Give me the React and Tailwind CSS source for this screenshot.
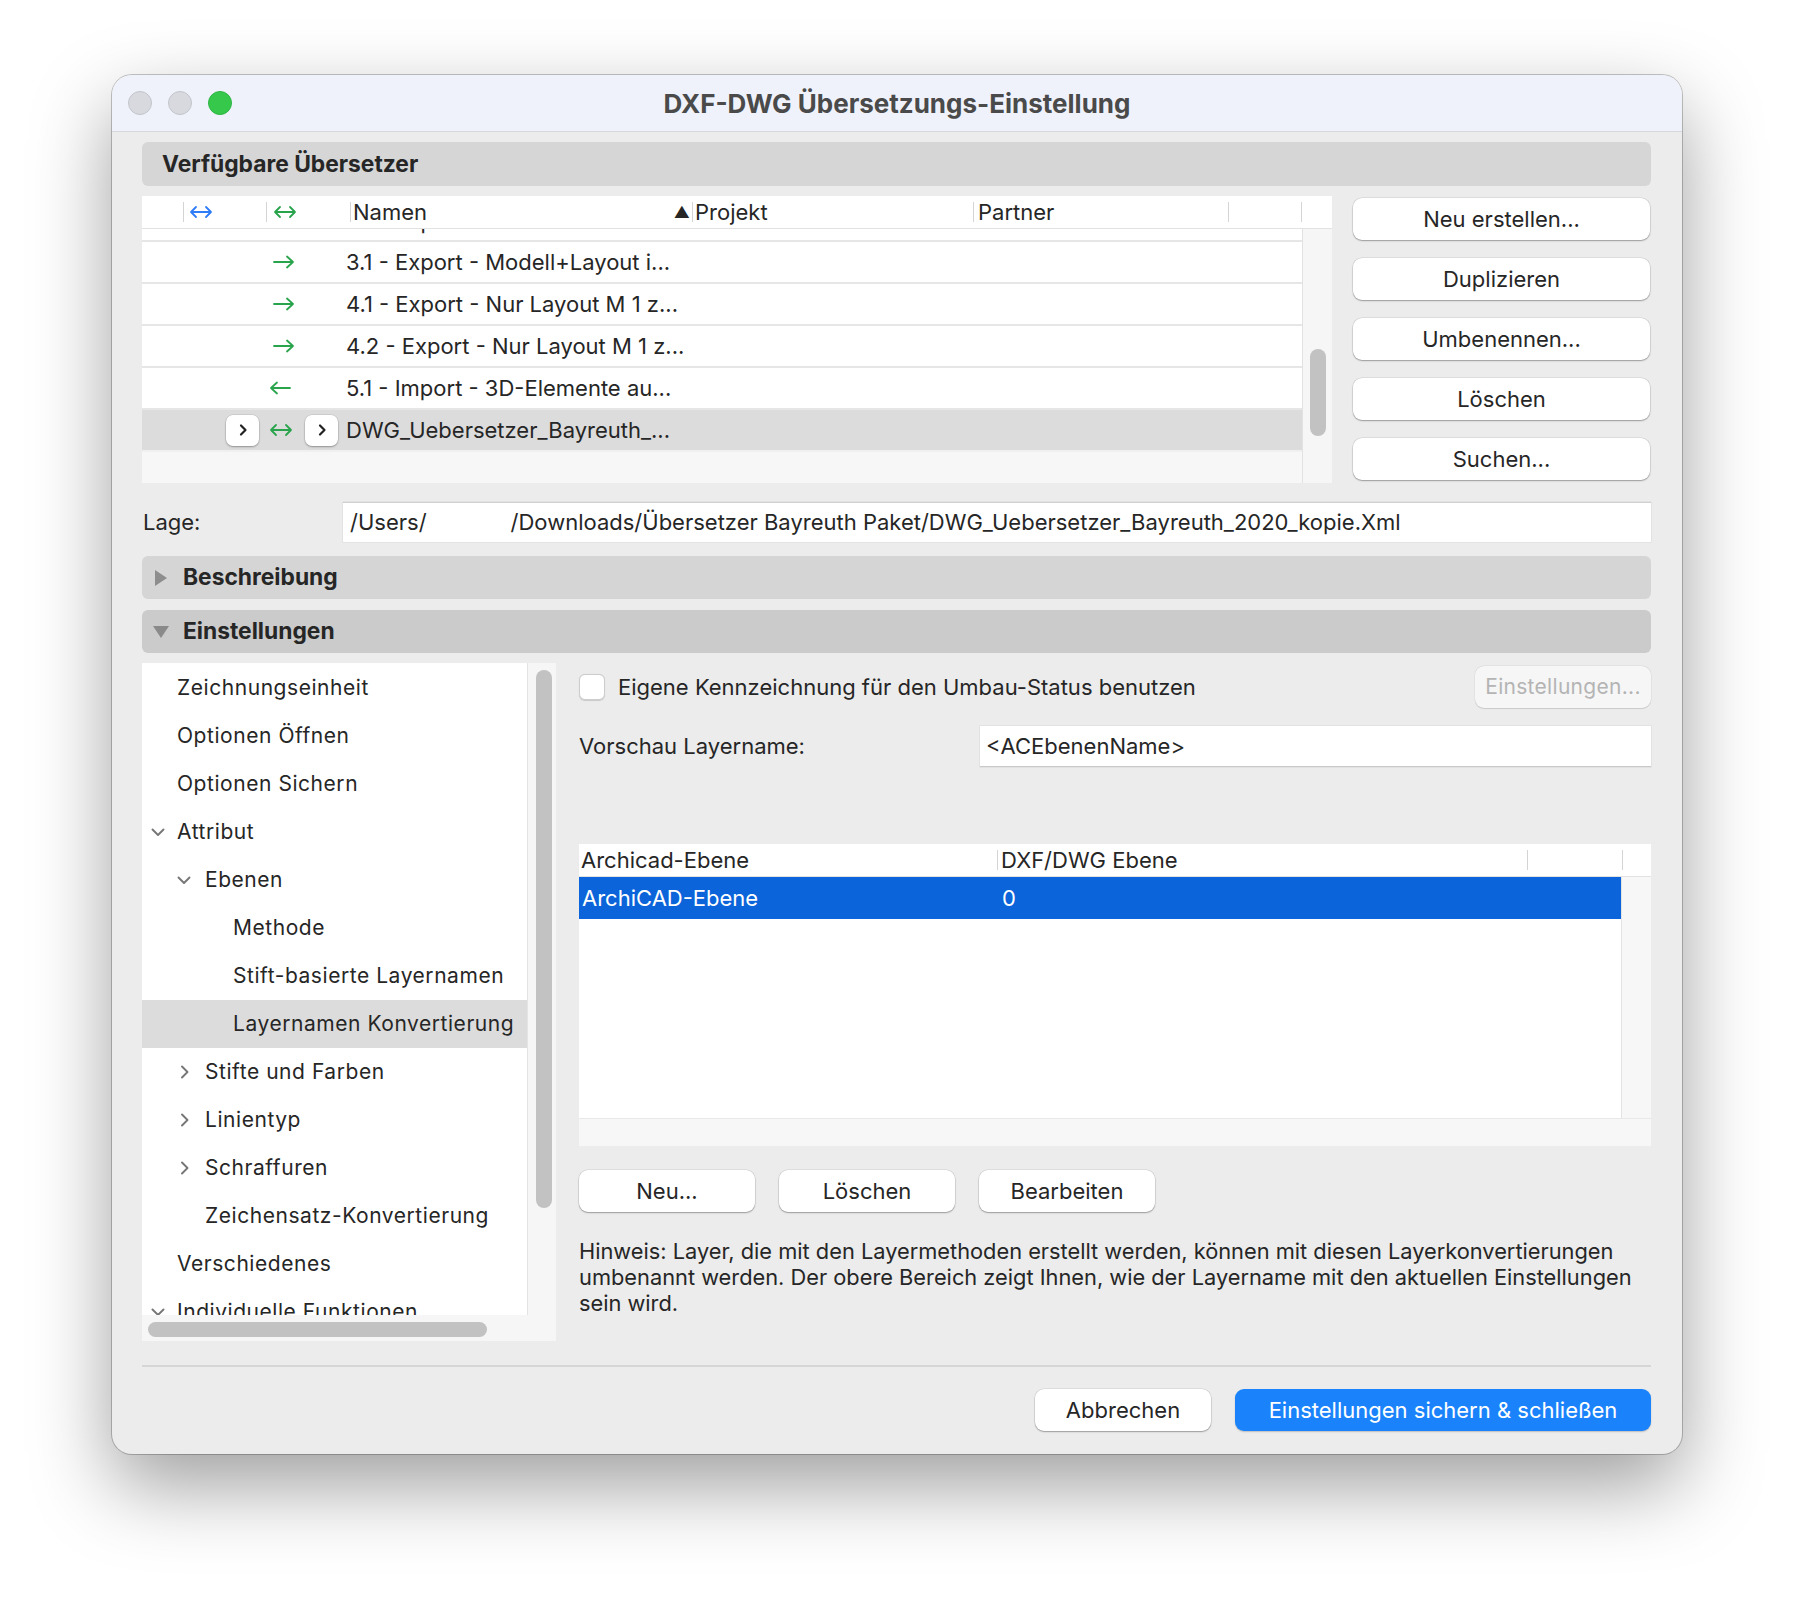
import React from "react";

const GREEN = "#2aa44c";
const BLUE = "#2f7cf6";

function ArrowRight() {
  return (
    <svg width="24" height="16" viewBox="0 0 24 16" fill="none" stroke={GREEN} strokeWidth="1.8" strokeLinecap="round" strokeLinejoin="round">
      <path d="M2 8h19M15 2.5 21 8l-6 5.5" />
    </svg>
  );
}

function ArrowLeft() {
  return (
    <svg width="24" height="16" viewBox="0 0 24 16" fill="none" stroke={GREEN} strokeWidth="1.8" strokeLinecap="round" strokeLinejoin="round">
      <path d="M22 8H3M9 2.5 3 8l6 5.5" />
    </svg>
  );
}

function ArrowBoth({ color = GREEN }) {
  return (
    <svg width="26" height="16" viewBox="0 0 26 16" fill="none" stroke={color} strokeWidth="1.8" strokeLinecap="round" strokeLinejoin="round">
      <path d="M3 8h20M8 3 3 8l5 5M18 3l5 5-5 5" />
    </svg>
  );
}

function Chevron({ dir = "right" }) {
  const d = dir === "right" ? "M6 2.5l5.5 5.5L6 13.5" : "M2.5 5.5 8 11l5.5-5.5";
  return (
    <svg width="16" height="16" viewBox="0 0 16 16" fill="none" stroke="#767676" strokeWidth="1.9" strokeLinecap="round" strokeLinejoin="round">
      <path d={d} />
    </svg>
  );
}

function MiniButton() {
  return (
    <div className="flex h-[31px] w-[33px] items-center justify-center rounded-[7px] bg-white shadow-[0_1px_2px_rgba(0,0,0,0.3),0_0_0_0.5px_rgba(0,0,0,0.1)]">
      <svg width="10" height="14" viewBox="0 0 10 14" fill="none" stroke="#222" strokeWidth="2.2" strokeLinecap="round" strokeLinejoin="round">
        <path d="M3 2.5 7.5 7 3 11.5" />
      </svg>
    </div>
  );
}

function MacButton({ children, className = "" }) {
  return (
    <div className={`flex h-[42px] items-center justify-center rounded-[9px] bg-white text-[22px] text-[#262626] shadow-[0_1px_1.5px_rgba(0,0,0,0.3),0_0_0_0.5px_rgba(0,0,0,0.12)] ${className}`}>
      {children}
    </div>
  );
}

function HeadSep() {
  return <div className="h-[20px] w-px shrink-0 bg-[#d4d4d4]" />;
}

const rows = [
  { arrow: "right", name: "3.1 - Export - Modell+Layout i..." },
  { arrow: "right", name: "4.1 - Export - Nur Layout M 1 z..." },
  { arrow: "right", name: "4.2 - Export - Nur Layout M 1 z..." },
  { arrow: "left", name: "5.1 - Import - 3D-Elemente au..." },
];

const tree = [
  { label: "Zeichnungseinheit", level: 0 },
  { label: "Optionen Öffnen", level: 0 },
  { label: "Optionen Sichern", level: 0 },
  { label: "Attribut", level: 0, chevron: "down" },
  { label: "Ebenen", level: 1, chevron: "down" },
  { label: "Methode", level: 2 },
  { label: "Stift-basierte Layernamen", level: 2 },
  { label: "Layernamen Konvertierung", level: 2, selected: true },
  { label: "Stifte und Farben", level: 1, chevron: "right" },
  { label: "Linientyp", level: 1, chevron: "right" },
  { label: "Schraffuren", level: 1, chevron: "right" },
  { label: "Zeichensatz-Konvertierung", level: 1 },
  { label: "Verschiedenes", level: 0 },
  { label: "Individuelle Funktionen", level: 0, chevron: "down" },
];

const levelPad = ["pl-[35px]", "pl-[63px]", "pl-[91px]"];
const chevPad = ["left-[8px]", "left-[34px]", "left-[62px]"];

export default function App() {
  return (
    <div className="min-h-[1602px] w-full bg-white pl-[112px] pt-[75px] text-[#262626] [font-family:Inter,'Noto_Sans',sans-serif]">
      <div className="flex h-[1379px] w-[1570px] flex-col overflow-hidden rounded-[20px] bg-[#ececec] shadow-[0_32px_80px_rgba(0,0,0,0.38),0_0_0_1px_rgba(0,0,0,0.22)]">
        {/* title bar */}
        <div className="grid h-[57px] shrink-0 grid-cols-[1fr_auto_1fr] items-center border-b border-[#d6d8de] bg-[#eff2fb]">
          <div className="flex items-center gap-[16px] pl-[16px]">
            <div className="h-[24px] w-[24px] rounded-full border border-[#c3c5cb] bg-[#d7d9df]" />
            <div className="h-[24px] w-[24px] rounded-full border border-[#c3c5cb] bg-[#d7d9df]" />
            <div className="h-[24px] w-[24px] rounded-full border border-[#2fb544] bg-[#35c84b]" />
          </div>
          <div className="text-[26px] font-bold text-[#4a4a4a]">DXF-DWG Übersetzungs-Einstellung</div>
          <div />
        </div>

        <div className="flex flex-1 flex-col pl-[30px] pr-[31px] pt-[10px]">
          {/* Verfügbare Übersetzer */}
          <div className="flex h-[44px] items-center rounded-[6px] bg-[#d6d6d6] pl-[20px] text-[22.8px] font-bold">
            Verfügbare Übersetzer
          </div>

          <div className="mt-[10px] flex gap-[21px]">
            <div className="flex h-[287px] w-[1190px] flex-col bg-[#f6f6f6]">
              {/* header */}
              <div className="flex h-[33px] shrink-0 items-center border-b border-[#e2e2e2] bg-white text-[22px]">
                <div className="w-[41px]" />
                <div className="flex w-[83px] items-center">
                  <HeadSep />
                  <div className="ml-[4px]"><ArrowBoth color={BLUE} /></div>
                </div>
                <div className="flex w-[84px] items-center">
                  <HeadSep />
                  <div className="ml-[5px]"><ArrowBoth /></div>
                </div>
                <div className="flex w-[342px] items-center">
                  <HeadSep />
                  <span className="ml-[2px]">Namen</span>
                  <span className="ml-auto mr-[2px] text-[16px]">▲</span>
                </div>
                <div className="flex w-[281px] items-center">
                  <HeadSep />
                  <span className="ml-[2px]">Projekt</span>
                </div>
                <div className="flex w-[255px] items-center">
                  <HeadSep />
                  <span className="ml-[4px]">Partner</span>
                </div>
                <div className="flex w-[73px] items-center">
                  <HeadSep />
                </div>
                <div className="flex items-center">
                  <HeadSep />
                </div>
              </div>

              {/* body */}
              <div className="flex flex-1">
                <div className="flex w-[1161px] flex-col border-r border-[#e2e2e2]">
                  <div className="h-[13px] overflow-hidden border-b-2 border-[#e6e6e6] bg-white">
                    <div className="-mt-[22px] pl-[204px] text-[22px] leading-[28px]">2.1 - Export - Modell i...</div>
                  </div>
                  {rows.map((r) => (
                    <div key={r.name} className="flex h-[42px] items-center border-b-2 border-[#e6e6e6] bg-white text-[22px]">
                      <div className={r.arrow === "right" ? "w-[204px] pl-[130px]" : "w-[204px] pl-[126px]"}>
                        {r.arrow === "right" ? <ArrowRight /> : <ArrowLeft />}
                      </div>
                      <span>{r.name}</span>
                    </div>
                  ))}
                  <div className="flex h-[42px] items-center border-b-2 border-[#f0f0f0] bg-[#dcdcdc] text-[22px]">
                    <div className="flex w-[204px] items-center pl-[84px]">
                      <MiniButton />
                      <div className="ml-[9px]"><ArrowBoth /></div>
                      <div className="ml-[11px]"><MiniButton /></div>
                    </div>
                    <span>DWG_Uebersetzer_Bayreuth_...</span>
                  </div>
                  <div className="flex-1 bg-[#f7f7f7]" />
                </div>
                <div className="flex-1 pl-[7px] pt-[120px]">
                  <div className="h-[87px] w-[16px] rounded-full bg-[#c2c2c2]" />
                </div>
              </div>
            </div>

            <div className="flex w-[297px] flex-col gap-[18px] pt-[2px]">
              <MacButton>Neu erstellen...</MacButton>
              <MacButton>Duplizieren</MacButton>
              <MacButton>Umbenennen...</MacButton>
              <MacButton>Löschen</MacButton>
              <MacButton>Suchen...</MacButton>
            </div>
          </div>

          {/* Lage */}
          <div className="mt-[19px] flex h-[40px] items-center text-[22px]">
            <div className="w-[201px] pl-px">Lage:</div>
            <div className="flex h-full flex-1 items-center border-t border-[#d0d0d0] bg-white pl-[7px] shadow-[0_0_0_0.5px_rgba(0,0,0,0.08)]">
              <span>/Users/</span>
              <span className="ml-[84px]">/Downloads/Übersetzer Bayreuth Paket/DWG_Uebersetzer_Bayreuth_2020_kopie.Xml</span>
            </div>
          </div>

          {/* Beschreibung */}
          <div className="mt-[14px] flex h-[43px] items-center rounded-[6px] bg-[#d5d5d5] text-[22.8px] font-bold">
            <svg width="14" height="18" viewBox="0 0 14 18" className="ml-[12px]">
              <path d="M1 1l12 8-12 8z" fill="#8d8d8d" />
            </svg>
            <span className="ml-[15px]">Beschreibung</span>
          </div>

          {/* Einstellungen */}
          <div className="mt-[11px] flex h-[43px] items-center rounded-[6px] bg-[#cbcbcb] text-[22.8px] font-bold">
            <svg width="18" height="14" viewBox="0 0 18 14" className="ml-[10px]">
              <path d="M1 1h16l-8 12z" fill="#8a8a8a" />
            </svg>
            <span className="ml-[13px]">Einstellungen</span>
          </div>

          <div className="mt-[10px] flex gap-[23px]">
            {/* tree */}
            <div className="flex h-[678px] w-[414px] shrink-0 flex-col bg-[#f6f6f6]">
              <div className="flex flex-1 overflow-hidden">
                <div className="w-[386px] overflow-hidden border-r border-[#e4e4e4] bg-white pt-px">
                  {tree.map((t) => (
                    <div
                      key={t.label}
                      className={`relative flex h-[48px] items-center text-[21px] tracking-[0.55px] ${levelPad[t.level]} ${t.selected ? "bg-[#dcdcdc]" : ""}`}
                    >
                      {t.chevron && (
                        <div className={`absolute top-[16px] ${chevPad[t.level]}`}>
                          <Chevron dir={t.chevron} />
                        </div>
                      )}
                      {t.label}
                    </div>
                  ))}
                </div>
                <div className="flex-1 pl-[8px] pt-[7px]">
                  <div className="h-[538px] w-[16px] rounded-full bg-[#c2c2c2]" />
                </div>
              </div>
              <div className="h-[26px] shrink-0 pl-[6px] pt-[7px]">
                <div className="h-[15px] w-[339px] rounded-full bg-[#c2c2c2]" />
              </div>
            </div>

            {/* right panel */}
            <div className="flex flex-1 flex-col pt-[3px]">
              <div className="flex h-[42px] items-center">
                <div className="h-[26px] w-[26px] rounded-[6px] border border-[#cdcdcd] bg-white shadow-[0_0.5px_1px_rgba(0,0,0,0.15)]" />
                <span className="ml-[13px] text-[22px]">Eigene Kennzeichnung für den Umbau-Status benutzen</span>
                <div className="ml-auto flex h-[42px] w-[176px] items-center justify-center rounded-[9px] bg-[#f6f6f6] text-[21px] tracking-[0.3px] text-[#b4b4b4] shadow-[0_0.5px_1px_rgba(0,0,0,0.12),0_0_0_0.5px_rgba(0,0,0,0.06)]">
                  Einstellungen...
                </div>
              </div>

              <div className="mt-[18px] flex h-[41px] items-center text-[22px]">
                <div className="w-[401px]">Vorschau Layername:</div>
                <div className="flex h-full flex-1 items-center border-b border-[#c9c9c9] bg-white pl-[6px] shadow-[0_0_0_0.5px_rgba(0,0,0,0.08)]">
                  &lt;ACEbenenName&gt;
                </div>
              </div>

              {/* layer table */}
              <div className="mt-[77px] flex flex-col text-[22px]">
                <div className="flex h-[33px] items-center border-b border-[#e2e2e2] bg-white">
                  <div className="w-[418px] pl-[2px]">Archicad-Ebene</div>
                  <HeadSep />
                  <div className="w-[529px] pl-[3px]">DXF/DWG Ebene</div>
                  <HeadSep />
                  <div className="w-[94px]" />
                  <HeadSep />
                </div>
                <div className="flex h-[241px]">
                  <div className="w-[1043px] border-r border-[#e4e4e4] bg-white">
                    <div className="flex h-[42px] items-center bg-[#0b64d9] text-white">
                      <div className="w-[423px] pl-[3px]">ArchiCAD-Ebene</div>
                      <div>0</div>
                    </div>
                  </div>
                  <div className="flex-1 bg-[#f7f7f7]" />
                </div>
                <div className="h-[28px] border-t border-[#e8e8e8] bg-[#f7f7f7]" />
              </div>

              <div className="mt-[24px] flex gap-[24px]">
                <MacButton className="w-[176px]">Neu...</MacButton>
                <MacButton className="w-[176px]">Löschen</MacButton>
                <MacButton className="w-[176px]">Bearbeiten</MacButton>
              </div>

              <p className="mt-[26px] text-[21.8px] leading-[26px]">
                Hinweis: Layer, die mit den Layermethoden erstellt werden, können mit diesen Layerkonvertierungen umbenannt werden. Der obere Bereich zeigt Ihnen, wie der Layername mit den aktuellen Einstellungen sein wird.
              </p>
            </div>
          </div>

          {/* footer */}
          <div className="mt-[24px] h-[2px] bg-[#d6d6d6]" />
          <div className="mt-[22px] flex justify-end gap-[24px]">
            <MacButton className="w-[176px]">Abbrechen</MacButton>
            <div className="flex h-[42px] w-[416px] items-center justify-center rounded-[9px] bg-[#1a83fb] text-[22px] text-white shadow-[0_1px_1.5px_rgba(0,0,0,0.2)]">
              Einstellungen sichern &amp; schließen
            </div>
          </div>
        </div>
      </div>
    </div>
  );
}
